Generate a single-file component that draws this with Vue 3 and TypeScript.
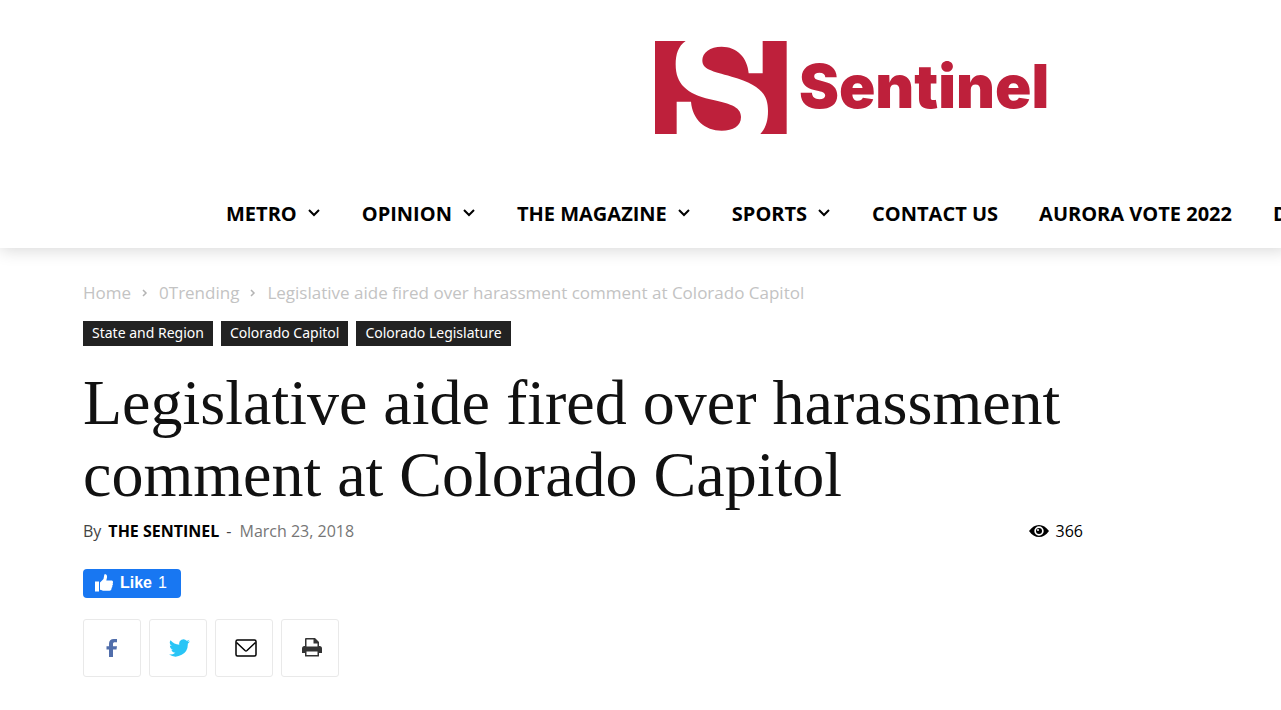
<script setup lang="ts">
interface NavItem {
  label: string
  menu: boolean
}

const navItems: NavItem[] = [
  { label: 'METRO', menu: true },
  { label: 'OPINION', menu: true },
  { label: 'THE MAGAZINE', menu: true },
  { label: 'SPORTS', menu: true },
  { label: 'CONTACT US', menu: false },
  { label: 'AURORA VOTE 2022', menu: false },
  { label: 'D', menu: false },
]

const title = 'Legislative aide fired over harassment comment at Colorado Capitol'
const tags: string[] = ['State and Region', 'Colorado Capitol', 'Colorado Legislature']
</script>

<template>
  <div class="page">
    <header class="header">
      <a class="logo" href="#" aria-label="Sentinel">
        <svg width="392" height="93" viewBox="0 0 1176 279">
          <path d="M0 0H92C70 15 62 40 62 70C62 130 95 158 165 175C220 188 258 195 258 228C258 255 235 269 200 269C150 269 112 235 108 182H65V279H0Z" />
          <path d="M323 0H395V279H316C332 262 339 240 339 210C339 155 310 130 230 107C170 90 142 86 142 58C142 35 165 17 200 17C245 17 278 50 281 97H323Z" />
          <text x="432" y="200">Sentinel</text>
        </svg>
      </a>
      <nav class="nav">
        <a v-for="item in navItems" :key="item.label" class="nav-link" href="#">
          {{ item.label }}
          <svg v-if="item.menu" class="chevron" width="12" height="8" viewBox="0 0 12 8">
            <path d="M1 1l5 5 5-5" />
          </svg>
        </a>
      </nav>
    </header>

    <main class="article">
      <nav class="crumbs" aria-label="Breadcrumb">
        <a href="#">Home</a>
        <svg width="6" height="8" viewBox="0 0 6 8"><path d="M1 1l3 3-3 3" /></svg>
        <a href="#">0Trending</a>
        <svg width="6" height="8" viewBox="0 0 6 8"><path d="M1 1l3 3-3 3" /></svg>
        <span>{{ title }}</span>
      </nav>

      <div class="tags">
        <a v-for="tag in tags" :key="tag" class="tag" href="#">{{ tag }}</a>
      </div>

      <h1 class="title">{{ title }}</h1>

      <div class="meta">
        <span class="by">By</span>
        <a class="author" href="#">THE SENTINEL</a>
        <span class="dash">-</span>
        <time datetime="2018-03-23">March 23, 2018</time>
        <span class="views">
          <svg width="20" height="12" viewBox="0 0 20 12">
            <path fill-rule="evenodd" d="M0 6C3 2 6 0 10 0s7 2 10 6c-3 4-6 6-10 6S3 10 0 6zM10 1.300a4.700 4.700 0 1 0 0 9.400a4.700 4.700 0 0 0 0-9.400z" />
            <circle cx="10" cy="6" r="3" />
            <circle cx="9" cy="5" r="1" fill="#fff" />
          </svg>
          366
        </span>
      </div>

      <button class="like" type="button">
        <svg width="18" height="18" viewBox="0 0 18 18">
          <path d="M0 7.500h4v10H0zM5 8.500L8.500 5 9.300.800C9.500 0 12.500 0 12 3.500L11.300 6.500H16c2 0 2.500 1.600 1.600 2.800.6.900.4 1.900-.4 2.400.4 1 .1 1.900-.7 2.300.3 1.500-.5 2.700-2 2.700H9c-1.700 0-2.500-.7-4-1z" />
        </svg>
        <strong>Like</strong>
        <span>1</span>
      </button>

      <div class="shares">
        <button class="share" type="button" aria-label="Facebook">
          <svg width="12" height="19" viewBox="0 0 12 19">
            <path fill="#516eab" d="M3 18V10.500H0.500V7.300H3V4.800C3 1.500 4.700 0 7.800 0H11v3.200H9C7.500 3.200 7 3.800 7 5v2.300h4l-.5 3.200H7V18z" />
          </svg>
        </button>
        <button class="share" type="button" aria-label="Twitter">
          <svg width="21" height="18" viewBox="0 0 24 20">
            <path fill="#29c5f6" d="M24 2.400a10 10 0 0 1-2.800.8A5 5 0 0 0 23.300.500a10 10 0 0 1-3.100 1.200A4.900 4.900 0 0 0 11.800 6.200 14 14 0 0 1 1.700 1.100a4.900 4.900 0 0 0 1.500 6.500A5 5 0 0 1 1 7v.1a4.900 4.900 0 0 0 3.900 4.800 5 5 0 0 1-2.200.1 4.900 4.900 0 0 0 4.600 3.400A10 10 0 0 1 0 17.500a14 14 0 0 0 21.500-12.400A10 10 0 0 0 24 2.400z" />
          </svg>
        </button>
        <button class="share" type="button" aria-label="Email">
          <svg width="22" height="18" viewBox="0 0 22 18" fill="none" stroke="#000" stroke-width="1.500">
            <rect x="1" y="1" width="20" height="16" rx="1.500" />
            <path d="M1.500 3.500L10 11.500Q11 12.300 12 11.500L20.500 3.500" />
          </svg>
        </button>
        <button class="share" type="button" aria-label="Print">
          <svg width="20" height="20" viewBox="0 0 20 20">
            <path fill="#333" fill-rule="evenodd" d="M3 8V1q0-1 1-1H13l4 4V8h.5Q20 8 20 10.500V15H17v3q0 .5-.5.500H3.500q-.5 0-.5-.5V15H0V10.500Q0 8 2.500 8zM4.500 1.500V8.500h11V5.500H11.500V1.500zM4.500 13.500v3.500h11V13.500z" />
          </svg>
        </button>
      </div>
    </main>
  </div>
</template>

<style>
body {
  margin: 0;
  background: #fff;
}
</style>

<style scoped>
.page {
  overflow: hidden;
  min-height: 100vh;
  font-family: 'Open Sans', 'Noto Sans', sans-serif;
}
a {
  color: inherit;
  text-decoration: none;
}
.header {
  width: max-content;
  min-width: 100%;
  padding-top: 41px;
  box-shadow: 0 2px 16px rgba(0, 0, 0, 0.16);
}
.logo {
  display: block;
  height: 93px;
  margin-left: 655px;
}
.logo svg {
  display: block;
  overflow: visible;
  fill: #be203b;
}
.logo text {
  font: 900 180px Inter, 'Liberation Sans', sans-serif;
}
.nav {
  display: flex;
  gap: 41px;
  margin-top: 46px;
  padding: 0 0 2px 226px;
}
.nav-link {
  display: flex;
  align-items: center;
  height: 66px;
  font-size: 20px;
  font-weight: 700;
  white-space: nowrap;
  color: #000;
}
.chevron {
  margin-left: 11px;
  margin-right: 1px;
  fill: none;
  stroke: #000;
  stroke-width: 2;
}
.article {
  max-width: 1000px;
  margin: 0 83px;
  padding-top: 33px;
}
.crumbs {
  display: flex;
  align-items: center;
  gap: 11px;
  font-size: 17px;
  line-height: 24px;
  color: #c3c3c3;
}
.crumbs svg {
  fill: none;
  stroke: #b4b4b4;
  stroke-width: 1.5;
}
.tags {
  display: flex;
  gap: 8px;
  margin-top: 16px;
}
.tag {
  padding: 0 9px 1px;
  background: #222;
  color: #fff;
  font-family: 'Noto Sans', sans-serif;
  font-size: 14px;
  line-height: 24px;
}
.title {
  margin: 21px 0 0;
  font: 400 64px/72px 'Liberation Serif', serif;
  color: #111;
}
.meta {
  display: flex;
  align-items: center;
  margin-top: 8px;
  font-size: 16px;
  line-height: 24px;
  color: #767676;
}
.by,
.dash {
  color: #444;
}
.author {
  margin: 0 7px;
  font-weight: 700;
  color: #000;
}
.dash {
  margin-right: 8px;
}
.views {
  display: flex;
  align-items: center;
  gap: 7px;
  margin-left: auto;
  color: #000;
}
.like {
  display: flex;
  align-items: center;
  margin-top: 26px;
  height: 29px;
  padding: 0 14px 2px 12px;
  border: 0;
  border-radius: 4px;
  background: #1877f2;
  color: #fff;
  font: 16px 'Liberation Sans', Arial, sans-serif;
}
.like svg {
  margin-right: 7px;
  fill: #fff;
}
.like strong {
  margin-right: 6px;
}
.shares {
  display: flex;
  gap: 8px;
  margin-top: 21px;
}
.share {
  display: flex;
  align-items: center;
  justify-content: center;
  width: 58px;
  height: 58px;
  padding: 0 0 0 3px;
  border: 1px solid #e9e9e9;
  border-radius: 3px;
  background: #fff;
}
.share:first-child {
  padding-left: 0;
}
</style>
